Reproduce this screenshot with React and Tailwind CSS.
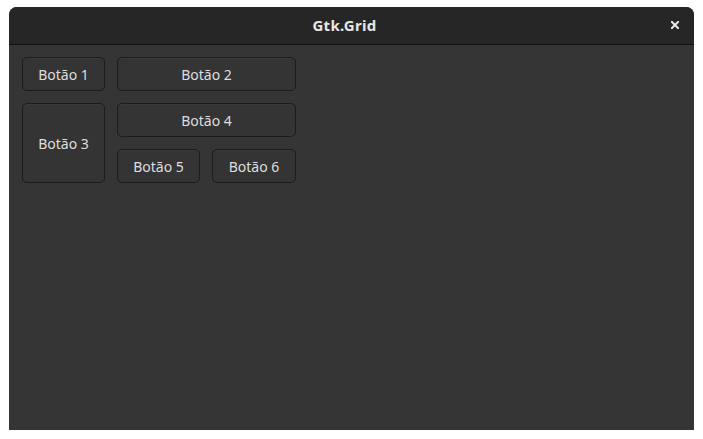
import React from "react";

const Btn = ({ children, className = "" }) => (
  <div
    className={
      "flex items-center justify-center rounded-[5px] border border-[#1c1c1c] bg-[#343434] text-[14px] text-[#dedede] shadow-[inset_0_1px_0_rgba(255,255,255,0.03)] " +
      className
    }
  >
    {children}
  </div>
);

export default function App() {
  return (
    <div
      className="h-[439px] w-[703px] bg-white pl-[9px] pt-[7px]"
      style={{ fontFamily: '"Noto Sans", "Open Sans", sans-serif' }}
    >
      <div className="flex h-[423px] w-[685px] flex-col overflow-hidden rounded-t-[8px] bg-[#353535]">
        <div className="relative flex h-[38px] items-center justify-center border-b border-[#111] bg-[#262626] pr-[14px]">
          <span className="text-[15px] font-bold tracking-[0.3px] text-[#e6e6e6]">Gtk.Grid</span>
          <svg
            className="absolute left-[662px] top-[14px]"
            width="8"
            height="8"
            viewBox="0 0 8 8"
          >
            <path d="M0.8 0.8L7.2 7.2M7.2 0.8L0.8 7.2" stroke="#e6e6e6" strokeWidth="2" strokeLinecap="square" />
          </svg>
        </div>
        <div className="grid w-max grid-cols-[83px_83px_84px] grid-rows-[34px_34px_34px] gap-x-[12px] gap-y-[12px] pl-[13px] pt-[12px]">
          <Btn>Botão 1</Btn>
          <Btn className="col-span-2">Botão 2</Btn>
          <Btn className="row-span-2">Botão 3</Btn>
          <Btn className="col-span-2">Botão 4</Btn>
          <Btn>Botão 5</Btn>
          <Btn>Botão 6</Btn>
        </div>
      </div>
    </div>
  );
}
